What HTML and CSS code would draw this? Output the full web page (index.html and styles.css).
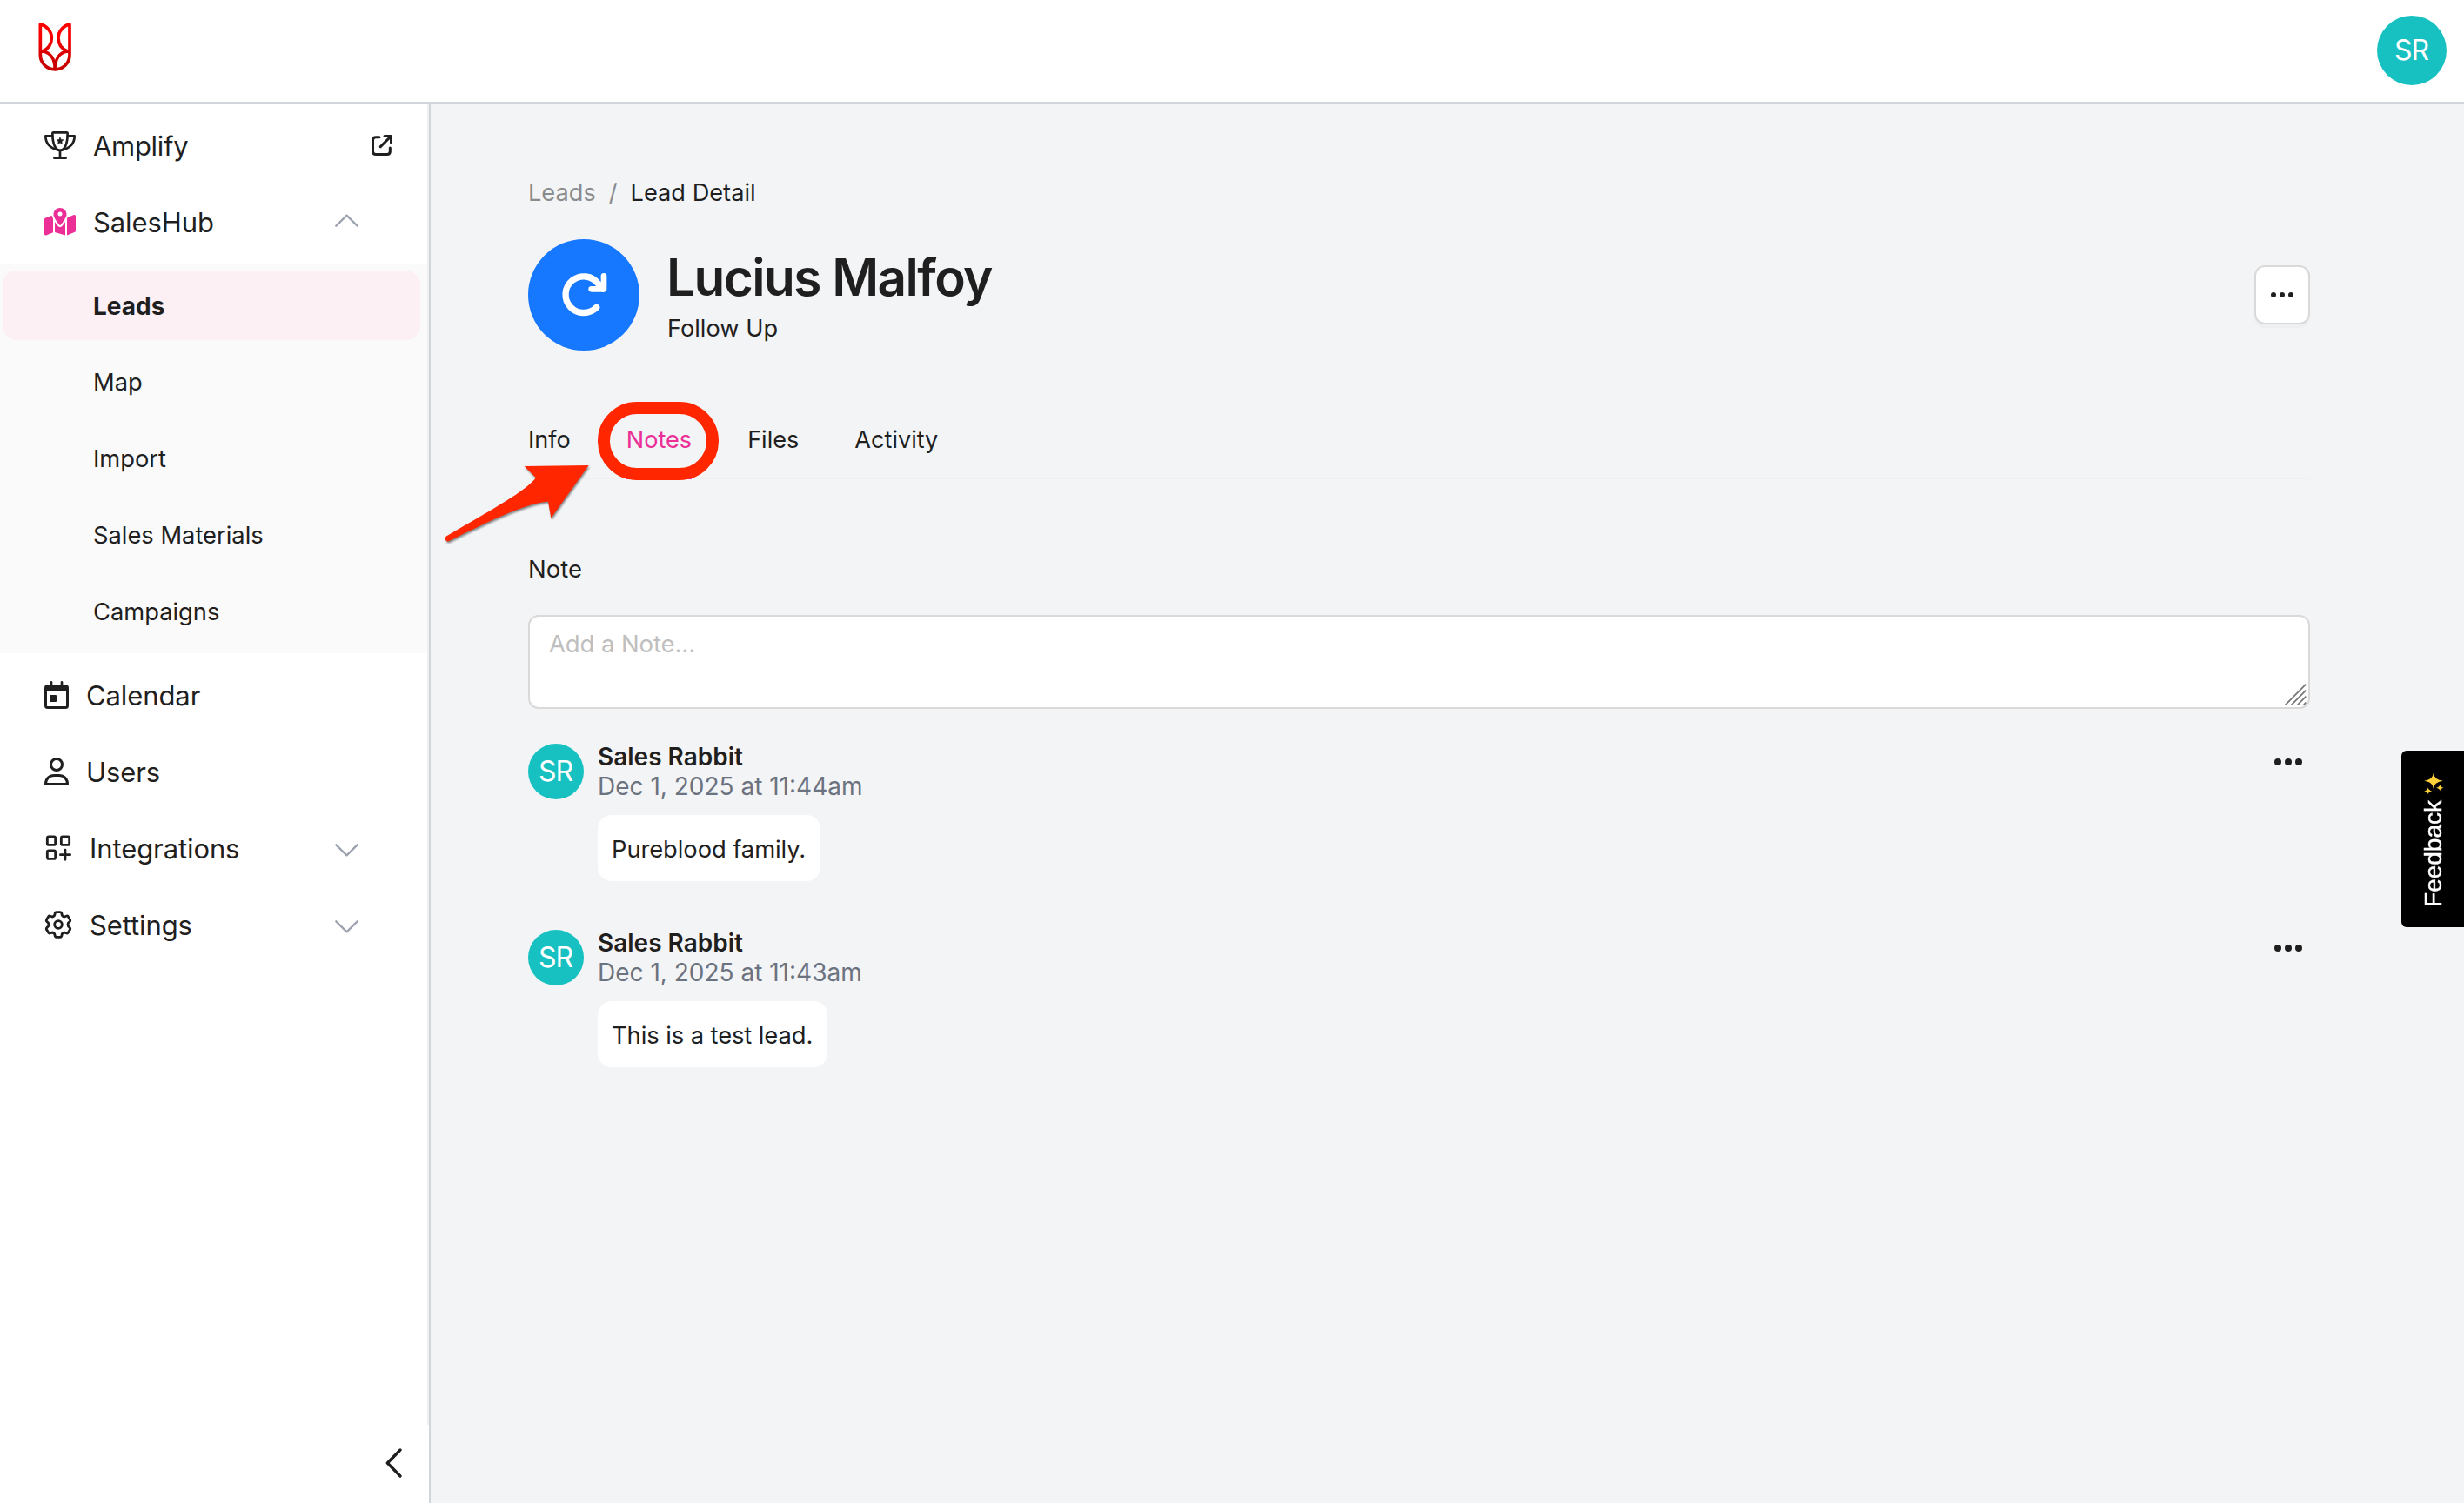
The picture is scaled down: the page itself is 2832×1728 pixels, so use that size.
FILE: index.html
```html
<!DOCTYPE html>
<html lang="en">
<head>
  <meta charset="UTF-8">
  <meta name="viewport" content="width=device-width, initial-scale=1.0">
  <title>Lead Detail</title>
  <link rel="stylesheet" href="styles.css">
</head>
<body>
  <header class="header">
    <svg class="logo" viewBox="132 78 114 168" fill="none" stroke="url(#logo-red)" stroke-width="11" stroke-linejoin="round">
      <defs>
        <linearGradient id="logo-red" gradientUnits="userSpaceOnUse" x1="0" y1="78" x2="0" y2="246">
          <stop offset="0.2" stop-color="#ff0000"/>
          <stop offset="0.85" stop-color="#c80000"/>
        </linearGradient>
      </defs>
      <path d="M139 84V189C139 218 161 239.500 189.500 239.500S240 218 240 189V84C219 88 201 108 201 131C201 150 211 167 232 177C206 181 189.500 203 189.500 239C189.500 203 173 181 147 177C168 167 178 150 178 131C178 108 160 88 139 84Z"/>
      <path d="M139 179L150 176M240 179L229 176"/>
    </svg>
    <div class="avatar avatar-lg">SR</div>
  </header>

  <div class="layout">
    <aside class="sidebar">
      <nav class="menu">
        <a class="menu-item">
          <svg class="icon-wide" viewBox="153 453 108 96" fill="none" stroke="currentColor" stroke-width="8" stroke-linecap="round" stroke-linejoin="round">
            <path d="M184 457H230Q233 457 233 461C233 497 222 519 207 519S181 497 181 461Q181 457 184 457Z"/>
            <path d="M181 469H157C157 498 178 514 207 519C236 514 257 498 257 469H233"/>
            <path d="M207 519V544M187 545H227"/>
            <path d="M207 474L210.500 481.500L218.500 482.500L212.500 488L214 496L207 492L200 496L201.500 488L195.500 482.500L203.500 481.500Z" fill="currentColor" stroke-width="2"/>
          </svg>
          <span class="menu-text tight">Amplify</span>
          <svg class="external" viewBox="1281 465 72 72" fill="none" stroke="currentColor" stroke-width="9" stroke-linecap="round" stroke-linejoin="round">
            <path d="M1308 473H1296Q1285.500 473 1285.500 483V522Q1285.500 532.500 1296 532.500H1335Q1345 532.500 1345 522V510"/>
            <path d="M1326 469.500H1348.500V492M1347 471L1312 506"/>
          </svg>
        </a>
        <a class="menu-item">
          <svg class="icon-wide pink" viewBox="0 0 576 512" fill="currentColor">
            <path d="M408 120c0 54.600-73.100 151.900-105.200 192c-7.700 9.600-22 9.600-29.600 0C241.100 271.900 168 174.600 168 120C168 53.700 221.700 0 288 0s120 53.700 120 120zm8 80.400c3.500-6.900 6.700-13.800 9.600-20.600c.5-1.200 1-2.500 1.500-3.700l116-46.400C558.900 123.400 576 135 576 152V422.800c0 9.800-6 18.600-15.100 22.300L416 503V200.400zM137.600 138.300c2.400 14.100 7.200 28.300 12.800 41.500c2.900 6.800 6.100 13.700 9.600 20.600V451.800L32.900 502.700C17.100 509 0 497.400 0 480.400V209.600c0-9.800 6-18.600 15.100-22.300l122.600-49zM327.800 332c13.900-17.400 35.700-45.700 56.200-77V504.300L192 449.400V255c20.500 31.300 42.300 59.600 56.200 77c20.500 25.600 59.100 25.600 79.600 0zM288 152a40 40 0 1 0 0-80 40 40 0 1 0 0 80z"/>
          </svg>
          <span class="menu-text">SalesHub</span>
          <svg class="chevron up" viewBox="0 0 81 45"><path d="M4 41L40.500 5L77 41"/></svg>
        </a>
        <div class="submenu">
          <a class="submenu-item active">Leads</a>
          <a class="submenu-item">Map</a>
          <a class="submenu-item">Import</a>
          <a class="submenu-item">Sales Materials</a>
          <a class="submenu-item">Campaigns</a>
        </div>
        <a class="menu-item">
          <svg class="icon-narrow" viewBox="153 129 84 96" fill="none" stroke="currentColor" stroke-width="9">
            <rect x="157.500" y="145.500" width="75" height="75" rx="7"/>
            <path d="M155 153H235V165H155Z" fill="currentColor" stroke="none"/>
            <path d="M157 150H233V160H157Z" fill="currentColor" stroke="none"/>
            <path d="M177 133V146M213 133V146" stroke-width="8" stroke-linecap="round"/>
            <rect x="171" y="177" width="24" height="24" rx="3" fill="currentColor" stroke="none"/>
          </svg>
          <span class="menu-text">Calendar</span>
        </a>
        <a class="menu-item">
          <svg class="icon-narrow" viewBox="153 393 84 96" fill="none" stroke="currentColor" stroke-width="9" stroke-linejoin="round">
            <circle cx="195" cy="417" r="19.500"/>
            <path d="M157.500 484.500H232.500C232.500 466 220 454.500 203 454.500H187C170 454.500 157.500 466 157.500 484.500Z"/>
          </svg>
          <span class="menu-text">Users</span>
        </a>
        <a class="menu-item">
          <svg class="icon" viewBox="153 658 96 96" fill="none" stroke="currentColor" stroke-width="8.500">
            <rect x="163" y="667" width="28" height="28" rx="5"/>
            <rect x="211" y="667" width="28" height="28" rx="5"/>
            <rect x="163" y="715" width="28" height="28" rx="5"/>
            <path d="M225 712V746M208 729H242" stroke-width="8" stroke-linecap="round"/>
          </svg>
          <span class="menu-text">Integrations</span>
          <svg class="chevron" viewBox="0 0 81 45"><path d="M4 4L40.500 40L77 4"/></svg>
        </a>
        <a class="menu-item">
          <svg class="icon" viewBox="-48 -48 96 96" fill="none" stroke="currentColor" stroke-width="8.500" stroke-linejoin="round">
            <path d="M-13 -32L-11 -40Q-10 -43 -7 -43H7Q10 -43 11 -40L13 -32Q16 -28 21 -27L29 -30Q32 -31 34 -28L41 -16Q42 -13 40 -11L34 -5Q32 0 34 5L40 11Q42 13 41 16L34 28Q32 31 29 30L21 27Q16 28 13 32L11 40Q10 43 7 43H-7Q-10 43 -11 40L-13 32Q-16 28 -21 27L-29 30Q-32 31 -34 28L-41 16Q-42 13 -40 11L-34 5Q-32 0 -34 -5L-40 -11Q-42 -13 -41 -16L-34 -28Q-32 -31 -29 -30L-21 -27Q-16 -28 -13 -32Z"/>
            <circle r="13"/>
          </svg>
          <span class="menu-text">Settings</span>
          <svg class="chevron" viewBox="0 0 81 45"><path d="M4 4L40.500 40L77 4"/></svg>
        </a>
      </nav>
      <div class="collapse">
        <svg viewBox="0 0 57 102" fill="none" stroke="currentColor" stroke-width="10" stroke-linecap="round" stroke-linejoin="round">
          <path d="M51 6L7 51L51 96"/>
        </svg>
      </div>
    </aside>

    <main class="content">
      <div class="breadcrumb">
        <span>Leads</span><span class="slash">/</span><span class="current">Lead Detail</span>
      </div>

      <div class="lead-head">
        <div class="status-icon">
          <svg viewBox="21 15 384 384" fill="none" stroke="#fff" stroke-width="22" stroke-linecap="round" stroke-linejoin="round">
            <path d="M257 250A62.500 62.500 0 1 1 263 169L279 186"/>
            <path d="M282 142V187H239" stroke-width="20"/>
          </svg>
        </div>
        <div class="lead-title">
          <h1>Lucius Malfoy</h1>
          <div class="status">Follow Up</div>
        </div>
        <button class="more-btn">
          <svg viewBox="0 0 26 6" fill="currentColor"><circle cx="3" cy="3" r="3"/><circle cx="13" cy="3" r="3"/><circle cx="23" cy="3" r="3"/></svg>
        </button>
      </div>

      <div class="tabs">
        <a class="tab">Info</a>
        <a class="tab active">Notes<span class="ring"></span></a>
        <a class="tab">Files</a>
        <a class="tab">Activity</a>
        <svg class="arrow" viewBox="0 0 1080 570">
          <path d="M560 255L338 258L378 298C340 345 240 400 70 499C60 506 68 523 79 516C200 455 340 385 420 380L430 437Z" fill="#ff2600"/>
        </svg>
      </div>

      <label class="note-label" for="note">Note</label>
      <div class="note-box">
        <textarea id="note" placeholder="Add a Note..."></textarea>
        <svg class="grip" viewBox="0 0 75 75"><path d="M2 73L73 2M23 73L73 23M44 73L73 44M65 73L73 65"/></svg>
      </div>

      <div class="notes">
        <div class="note">
          <div class="avatar">SR</div>
          <div class="note-body">
            <div class="author">Sales Rabbit</div>
            <div class="date">Dec 1, 2025 at 11:44am</div>
            <div class="bubble">Pureblood family.</div>
          </div>
          <svg class="dots" viewBox="0 0 32 8" fill="currentColor"><circle cx="4" cy="4" r="4"/><circle cx="16" cy="4" r="4"/><circle cx="28" cy="4" r="4"/></svg>
        </div>
        <div class="note">
          <div class="avatar">SR</div>
          <div class="note-body">
            <div class="author">Sales Rabbit</div>
            <div class="date">Dec 1, 2025 at 11:43am</div>
            <div class="bubble">This is a test lead.</div>
          </div>
          <svg class="dots" viewBox="0 0 32 8" fill="currentColor"><circle cx="4" cy="4" r="4"/><circle cx="16" cy="4" r="4"/><circle cx="28" cy="4" r="4"/></svg>
        </div>
      </div>
    </main>
  </div>

  <div class="feedback">
    <svg class="sparkles" viewBox="738 626 70 74" fill="#fdd13a">
      <path d="M771 626Q774 650 805 653Q774 656 771 680Q768 656 738 653Q768 650 771 626Z"/>
      <path d="M752 677Q754 687 766 689Q754 691 752 700Q750 691 738 689Q750 687 752 677Z"/>
      <path d="M794 667Q796 676 807 678Q796 680 794 688Q792 680 781 678Q792 676 794 667Z"/>
    </svg>
    <span class="feedback-text">Feedback</span>
  </div>
</body>
</html>
```
FILE: styles.css
```css
:root {
  --text: #1f1f1f;
  --pink: #eb2f96;
  --teal: #17c1c1;
  --line: #d1d5db;
  --bg: #f3f4f6;
}

* {
  box-sizing: border-box;
}

body {
  margin: 0;
  height: 1728px;
  display: flex;
  flex-direction: column;
  overflow: hidden;
  font-family: Inter, "Liberation Sans", sans-serif;
  font-size: 27.5px;
  line-height: 44px;
  color: var(--text);
  background: var(--bg);
}

svg {
  display: block;
  flex: none;
}

/* Header */
.header {
  height: 119px;
  flex: none;
  display: flex;
  justify-content: space-between;
  align-items: flex-start;
  padding: 18px 20px 0 44px;
  background: #fff;
  border-bottom: 2px solid var(--line);
}

.logo {
  width: 38px;
  height: 56px;
  margin-top: 8px;
}

.avatar {
  width: 64px;
  height: 64px;
  flex: none;
  display: flex;
  align-items: center;
  justify-content: center;
  border-radius: 50%;
  background: var(--teal);
  color: #fff;
  font-size: 32px;
  letter-spacing: -1px;
  padding-right: 1px;
}

.avatar-lg {
  width: 80px;
  height: 80px;
}

.layout {
  flex: 1;
  display: flex;
}

/* Sidebar */
.sidebar {
  width: 495px;
  flex: none;
  display: flex;
  flex-direction: column;
  background: #fff;
  border-right: 2px solid var(--line);
}

.menu {
  height: 1519px;
  padding-top: 8px;
  border-right: 2px solid #f0f0f0;
}

.menu-item {
  height: 80px;
  margin-bottom: 8px;
  padding-left: 51px;
  display: flex;
  align-items: center;
  gap: 20px;
  font-size: 31px;
  letter-spacing: -0.1px;
}

.menu-text {
  flex: 1;
  padding-top: 1px;
}

.tight {
  letter-spacing: -0.3px;
}

.icon {
  width: 32px;
  height: 32px;
}

.icon-wide {
  width: 36px;
  height: 32px;
}

.icon-narrow {
  width: 28px;
  height: 32px;
}

.pink {
  color: var(--pink);
}

.external {
  width: 24px;
  height: 24px;
  margin-right: 40px;
}

.chevron {
  width: 27px;
  height: 15px;
  margin: 4px 79px 0 0;
  fill: none;
  stroke: #9ca3af;
  stroke-width: 7;
  stroke-linecap: round;
  stroke-linejoin: round;
}

.chevron.up {
  margin: 0 79px 4px 0;
}

.submenu {
  display: flex;
  flex-direction: column;
  gap: 8px;
  padding: 8px 8px 8px 3px;
  margin-bottom: 8px;
  background: #fafafa;
}

.submenu-item {
  height: 80px;
  line-height: 80px;
  padding: 1px 0 0 104px;
  border-radius: 16px;
  font-size: 27.3px;
}

.submenu-item.active {
  background: #fdf0f4;
  font-size: 28px;
  font-weight: 700;
}

.collapse {
  flex: 1;
  display: flex;
  justify-content: flex-end;
  padding: 27px 31px 0 0;
}

.collapse svg {
  width: 19px;
  height: 34px;
}

/* Content */
.content {
  flex: 1;
  padding: 81px 177px 0 112px;
}

.breadcrumb {
  display: flex;
  color: #8a8b8c;
  font-size: 27.2px;
}

.slash {
  margin: 0 15px 0 15px;
}

.current {
  color: var(--text);
}

.lead-head {
  display: flex;
  align-items: center;
  gap: 32px;
  margin-top: 31px;
}

.status-icon {
  width: 128px;
  height: 128px;
  border-radius: 50%;
  background: #1677ff;
}

.lead-title {
  flex: 1;
  padding-top: 2px;
}

h1 {
  margin: 0 0 0 -1px;
  padding-top: 1px;
  font-size: 58.5px;
  line-height: 75px;
  font-weight: 600;
  letter-spacing: -1.55px;
}

.status {
  font-size: 27.2px;
}

.more-btn {
  width: 64px;
  height: 68px;
  padding: 0;
  display: flex;
  align-items: center;
  justify-content: center;
  color: var(--text);
  background: #fff;
  border: 2px solid #d9d9d9;
  border-radius: 12px;
  box-shadow: 0 4px 0 rgba(0, 0, 0, 0.02);
}

.more-btn svg {
  width: 26px;
  height: 6px;
}

.tabs {
  position: relative;
  display: flex;
  gap: 64px;
  margin-top: 81px;
  border-bottom: 2px solid #f0f0f0;
  font-size: 27.1px;
}

.tab {
  position: relative;
  padding-bottom: 21px;
}

.tab.active {
  color: var(--pink);
  border-bottom: 2px solid var(--pink);
  margin-bottom: -2px;
}

.ring {
  position: absolute;
  left: -33px;
  top: -22px;
  width: 139px;
  height: 90px;
  border: 14px solid #ff2600;
  border-radius: 45px;
}

.arrow {
  position: absolute;
  left: -117px;
  top: -34px;
  width: 360px;
  height: 190px;
  filter: drop-shadow(1px 2px 1px rgba(0, 0, 0, 0.45));
}

/* Notes */
.note-label {
  display: block;
  margin-top: 81px;
}

.note-box {
  position: relative;
  margin-top: 31px;
}

textarea {
  display: block;
  width: 100%;
  height: 108px;
  padding: 9px 22px;
  font: inherit;
  letter-spacing: -0.1px;
  background: #fff;
  border: 2px solid #d9d9d9;
  border-radius: 12px;
  resize: none;
}

textarea::placeholder {
  color: #bfbfbf;
}

.grip {
  position: absolute;
  right: 4px;
  bottom: 4px;
  width: 25px;
  height: 25px;
  fill: none;
  stroke: #757575;
  stroke-width: 5;
}

.notes {
  display: flex;
  flex-direction: column;
  gap: 54px;
  margin-top: 38px;
}

.note {
  display: flex;
  gap: 16px;
}

.note .avatar {
  margin-top: 2px;
}

.note-body {
  flex: 1;
  font-size: 28px;
}

.author,
.date {
  line-height: 34px;
}

.author {
  font-weight: 600;
}

.date {
  color: #6b7280;
}

.bubble {
  width: fit-content;
  height: 76px;
  margin-top: 16px;
  padding: 17px 17px 15px 16px;
  background: #fff;
  border-radius: 16px;
  font-size: 27.4px;
  letter-spacing: -0.1px;
}

.dots {
  width: 32px;
  height: 8px;
  margin: 19px 9px 0 0;
}

/* Feedback tab */
.feedback {
  position: absolute;
  right: 0;
  top: 863px;
  width: 72px;
  height: 203px;
  padding: 26px 0 0 26px;
  background: #000;
  border-radius: 6px 0 0 6px;
  color: #fff;
}

.sparkles {
  width: 23px;
  height: 24px;
}

.feedback-text {
  display: block;
  margin: 7px 0 0 -5px;
  writing-mode: vertical-rl;
  transform: rotate(180deg);
  font-family: "Liberation Sans", Arial, sans-serif;
  font-size: 28px;
  line-height: 32px;
  -webkit-text-stroke: 0.4px #fff;
}
```
